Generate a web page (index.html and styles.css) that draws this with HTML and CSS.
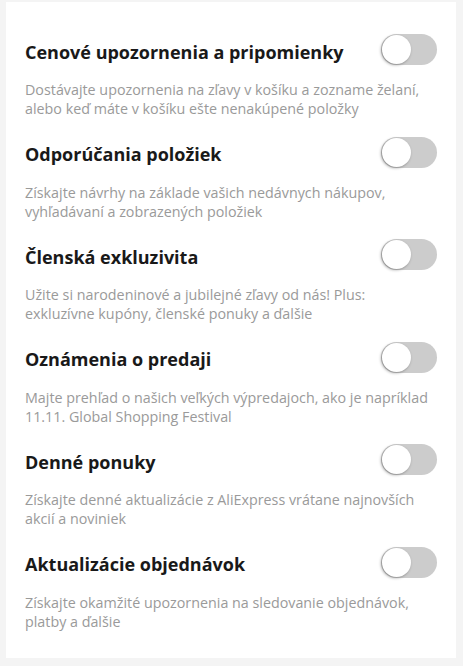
FILE: index.html
```html
<!DOCTYPE html>
<html lang="sk">
<head>
<meta charset="utf-8">
<link rel="stylesheet" href="styles.css">
</head>
<body>
<div class="card">
  <div class="item">
    <div class="head"><h3 class="title">Cenové upozornenia a pripomienky</h3><span class="toggle"><span class="knob"></span></span></div>
    <p class="desc">Dostávajte upozornenia na zľavy v košíku a zozname želaní, alebo keď máte v košíku ešte nenakúpené položky</p>
  </div>
  <div class="item">
    <div class="head"><h3 class="title">Odporúčania položiek</h3><span class="toggle"><span class="knob"></span></span></div>
    <p class="desc">Získajte návrhy na základe vašich nedávnych nákupov, vyhľadávaní a zobrazených položiek</p>
  </div>
  <div class="item">
    <div class="head"><h3 class="title">Členská exkluzivita</h3><span class="toggle"><span class="knob"></span></span></div>
    <p class="desc">Užite si narodeninové a jubilejné zľavy od nás! Plus:<br>exkluzívne kupóny, členské ponuky a ďalšie</p>
  </div>
  <div class="item">
    <div class="head"><h3 class="title">Oznámenia o predaji</h3><span class="toggle"><span class="knob"></span></span></div>
    <p class="desc">Majte prehľad o našich veľkých výpredajoch, ako je napríklad 11.11. Global Shopping Festival</p>
  </div>
  <div class="item">
    <div class="head"><h3 class="title">Denné ponuky</h3><span class="toggle"><span class="knob"></span></span></div>
    <p class="desc">Získajte denné aktualizácie z AliExpress vrátane najnovších akcií a noviniek</p>
  </div>
  <div class="item">
    <div class="head"><h3 class="title">Aktualizácie objednávok</h3><span class="toggle"><span class="knob"></span></span></div>
    <p class="desc">Získajte okamžité upozornenia na sledovanie objednávok, platby a ďalšie</p>
  </div>
</div>
</body>
</html>
```
FILE: styles.css
```css
html, body {
  margin: 0;
  padding: 0;
  background: #f4f4f4;
}
body {
  padding: 2px 7px 8px 6px;
  font-family: "Open Sans", "Noto Sans", sans-serif;
}
.card {
  background: #fff;
  padding: 32px 19px 27px 19px;
  display: flex;
  flex-direction: column;
  gap: 18.6px;
}
.item {
  display: flex;
  flex-direction: column;
}
.head {
  display: flex;
  align-items: center;
  justify-content: space-between;
  height: 31px;
}
.title {
  margin: 0;
  font-size: 18px;
  font-weight: 700;
  color: #191919;
  line-height: 24px;
  padding-top: 4px;
}
.toggle {
  width: 56px;
  height: 31px;
  border-radius: 16px;
  background: #cccccc;
  display: flex;
  align-items: center;
  flex-shrink: 0;
}
.knob {
  width: 29px;
  height: 29px;
  border-radius: 50%;
  background: #fff;
  margin-left: 1px;
  box-shadow: -1px 1px 3px rgba(0,0,0,0.35);
}
.desc {
  margin: 15px 0 0 0;
  font-size: 14.3px;
  line-height: 19px;
  color: #9a9a9a;
  height: 38px;
}
```
